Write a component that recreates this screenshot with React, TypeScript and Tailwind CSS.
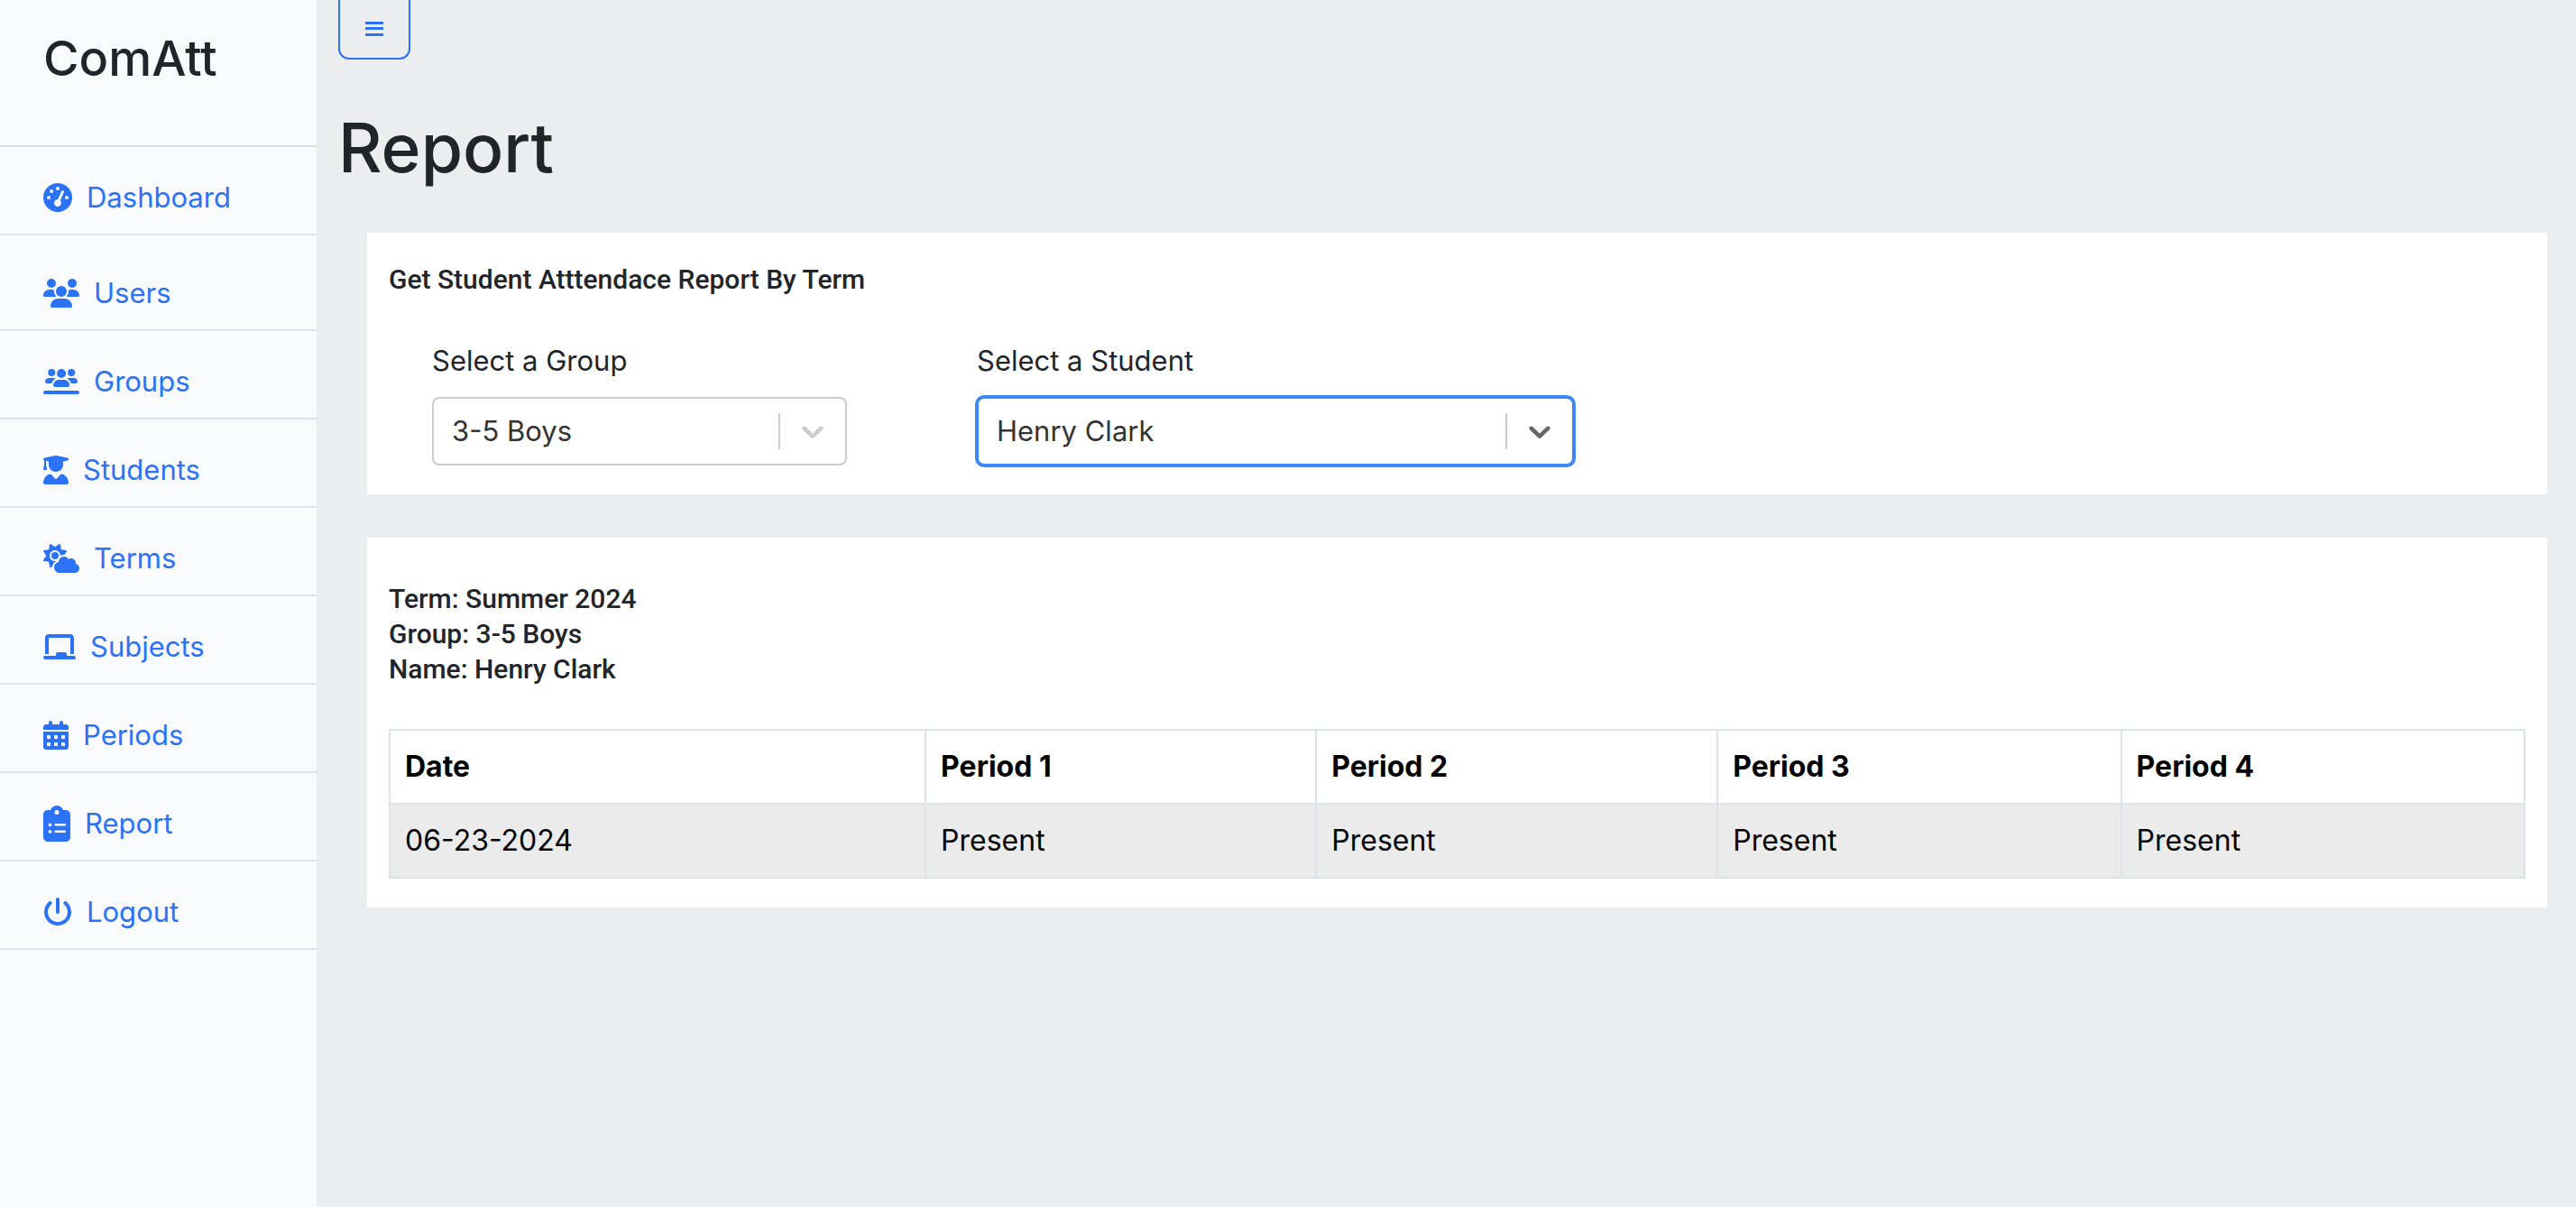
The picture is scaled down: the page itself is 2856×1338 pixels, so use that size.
import type { ComponentType } from "react";
import {
  FaCalendarDays,
  FaChalkboard,
  FaClipboardList,
  FaCloudSun,
  FaGaugeHigh,
  FaPowerOff,
  FaUserGraduate,
  FaUsers,
  FaUsersLine,
} from "react-icons/fa6";

type NavItem = {
  label: string;
  icon: ComponentType<{ className?: string }>;
  iconSize: string;
  spaced?: boolean;
};

const navItems: NavItem[] = [
  { label: "Dashboard", icon: FaGaugeHigh, iconSize: "w-8 h-8" },
  { label: "Users", icon: FaUsers, iconSize: "w-10 h-8", spaced: true },
  { label: "Groups", icon: FaUsersLine, iconSize: "w-10 h-8" },
  { label: "Students", icon: FaUserGraduate, iconSize: "w-7 h-8" },
  { label: "Terms", icon: FaCloudSun, iconSize: "w-10 h-8" },
  { label: "Subjects", icon: FaChalkboard, iconSize: "w-9 h-8" },
  { label: "Periods", icon: FaCalendarDays, iconSize: "w-7 h-8" },
  { label: "Report", icon: FaClipboardList, iconSize: "w-[30px] h-10" },
  { label: "Logout", icon: FaPowerOff, iconSize: "w-8 h-8" },
];

const columns = ["Date", "Period 1", "Period 2", "Period 3", "Period 4"];
const rows = [["06-23-2024", "Present", "Present", "Present", "Present"]];

function Sidebar() {
  return (
    <aside className="w-[351px] shrink-0 bg-[#f8fafc]">
      <div className="flex h-[163px] items-start border-b-2 border-[#dcdde0] px-12 pt-8">
        <h3 className="text-[54px] leading-[66px] font-medium text-[#212529]">ComAtt</h3>
      </div>
      <nav>
        {navItems.map(({ label, icon: Icon, iconSize, spaced }) => (
          <a
            key={label}
            href="#"
            className={`flex items-center gap-4 border-b-2 border-[#dfe2e8] px-12 pb-4 text-[31px] leading-[48px] text-[#2b72f6] ${spaced ? "pt-10" : "pt-8"}`}
          >
            <Icon className={`shrink-0 ${iconSize}`} />
            <span>{label}</span>
          </a>
        ))}
      </nav>
    </aside>
  );
}

type SelectFieldProps = {
  id: string;
  label: string;
  value: string;
  width: string;
  focused?: boolean;
};

function SelectField({ id, label, value, width, focused }: SelectFieldProps) {
  return (
    <div className={`max-w-full ${width}`}>
      <label htmlFor={id} className="mb-4 block text-[31px] leading-[48px] text-[#212529]">
        {label}
      </label>
      <div
        className={`relative h-[76px] rounded-lg border-2 bg-white ${focused ? "border-[#3d88f8] ring-2 ring-[#3d88f8]" : "border-[#cccccc]"}`}
      >
        <select
          id={id}
          defaultValue={value}
          className="h-full w-full appearance-none bg-transparent pr-20 pl-5 text-[31px] text-[#333333] outline-none"
        >
          <option value={value}>{value}</option>
        </select>
        <div
          className={`pointer-events-none absolute inset-y-0 right-0 flex items-center ${focused ? "text-[#666666]" : "text-[#cccccc]"}`}
        >
          <span className="h-10 w-0.5 bg-[#cccccc]" />
          <svg viewBox="0 0 20 20" className="mx-4 h-10 w-10 fill-current" aria-hidden="true">
            <path d="M4.516 7.548c0.436-0.446 1.043-0.481 1.576 0l3.908 3.747 3.908-3.747c0.533-0.481 1.141-0.446 1.574 0 0.436 0.445 0.408 1.197 0 1.615-0.406 0.418-4.695 4.502-4.695 4.502-0.217 0.223-0.502 0.335-0.787 0.335s-0.57-0.112-0.789-0.335c0 0-4.287-4.084-4.695-4.502s-0.436-1.17 0-1.615z" />
          </svg>
        </div>
      </div>
    </div>
  );
}

function ReportTable() {
  return (
    <table className="w-full table-fixed border-collapse border-2 border-[#dee2e6] text-left text-[32px] leading-[48px] text-black">
      <colgroup>
        <col className="w-[25.1%]" />
        <col className="w-[18.3%]" />
        <col className="w-[18.8%]" />
        <col className="w-[18.9%]" />
        <col className="w-[18.9%]" />
      </colgroup>
      <thead>
        <tr>
          {columns.map((name) => (
            <th key={name} className="border-2 border-[#dee2e6] p-4 font-bold">
              {name}
            </th>
          ))}
        </tr>
      </thead>
      <tbody>
        {rows.map((row) => (
          <tr key={row[0]} className="bg-[#ebebeb]">
            {row.map((cell, index) => (
              <td key={index} className="border-2 border-[#dee2e6] p-4">
                {cell}
              </td>
            ))}
          </tr>
        ))}
      </tbody>
    </table>
  );
}

export default function App() {
  return (
    <div className="flex min-h-screen bg-[#ecedef] font-['Inter',sans-serif]">
      <Sidebar />
      <main className="min-w-0 flex-1 pr-8 pl-6">
        <button
          type="button"
          aria-label="Toggle menu"
          className="flex h-[66px] w-20 items-center justify-center rounded-b-xl border-2 border-t-0 border-[#2b72f6] text-[#2b72f6]"
        >
          <svg viewBox="0 0 20 18" className="h-[18px] w-5 fill-current" aria-hidden="true">
            <path d="M0 1h20v3H0zM0 7h20v3H0zM0 14h20v3H0z" />
          </svg>
        </button>
        <h1 className="mt-[50px] text-[75px] leading-[96px] font-medium text-[#212529]">Report</h1>
        <div className="mt-[46px] ml-8 flex flex-col gap-12">
          <section className="bg-white px-6 pt-8 pb-8">
            <h5 className="font-['Roboto',sans-serif] text-[30px] leading-[39px] font-medium text-[#212529]">
              Get Student Atttendace Report By Term
            </h5>
            <div className="mt-[47px] flex flex-wrap gap-x-36 gap-y-6 px-12">
              <SelectField id="group" label="Select a Group" value="3-5 Boys" width="w-[460px]" />
              <SelectField id="student" label="Select a Student" value="Henry Clark" width="w-[662px]" focused />
            </div>
          </section>
          <section className="bg-white px-6 pt-12 pb-8">
            <h5 className="font-['Roboto',sans-serif] text-[30px] leading-[39px] font-medium text-[#212529]">
              Term: Summer 2024
              <br />
              Group: 3-5 Boys
              <br />
              Name: Henry Clark
            </h5>
            <div className="mt-[47px]">
              <ReportTable />
            </div>
          </section>
        </div>
      </main>
    </div>
  );
}
